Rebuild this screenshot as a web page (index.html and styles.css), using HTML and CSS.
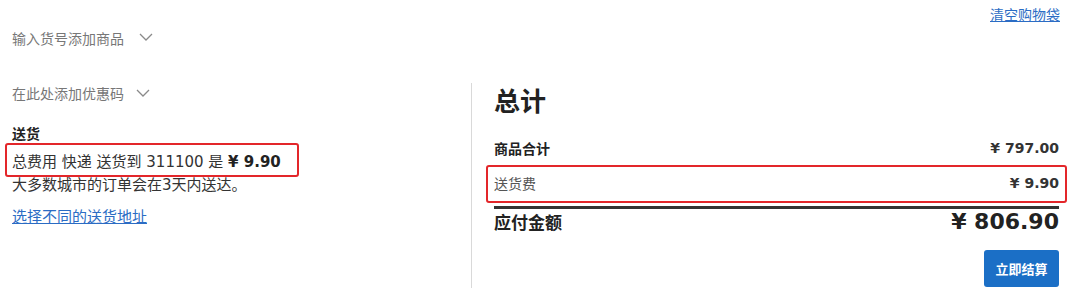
FILE: index.html
```html
<!DOCTYPE html>
<html lang="zh">
<head>
<meta charset="utf-8">
<title>购物袋</title>
<link rel="stylesheet" href="styles.css">
</head>
<body>
<div class="page">
  <div class="topbar">
    <a class="link clear-link" href="#">清空购物袋</a>
  </div>
  <div class="toggle sku-toggle">
    <span>输入货号添加商品</span>
    <svg class="chev" width="14" height="8" viewBox="0 0 14 8"><polyline points="1,1 7,7 13,1" fill="none" stroke="#8a8a8a" stroke-width="1.3"/></svg>
  </div>
  <div class="main">
    <div class="left">
      <div class="toggle promo-toggle">
        <span>在此处添加优惠码</span>
        <svg class="chev" width="14" height="8" viewBox="0 0 14 8"><polyline points="1,1 7,7 13,1" fill="none" stroke="#8a8a8a" stroke-width="1.3"/></svg>
      </div>
      <div class="ship-title">送货</div>
      <div class="ship-line annot-left">总费用 快递 送货到 311100 是 <b>¥ 9.90</b></div>
      <div class="ship-note">大多数城市的订单会在3天内送达。</div>
      <a class="link ship-link" href="#">选择不同的送货地址</a>
    </div>
    <div class="right">
      <div class="sum-title">总计</div>
      <div class="row row-sub">
        <span class="row-label">商品合计</span>
        <span class="row-val">¥ 797.00</span>
      </div>
      <div class="row row-ship annot-right">
        <span class="row-label-light">送货费</span>
        <span class="row-val">¥ 9.90</span>
      </div>
      <div class="row row-total">
        <span class="total-label">应付金额</span>
        <span class="total-val">¥ 806.90</span>
      </div>
      <div class="actions">
        <button class="checkout">立即结算</button>
      </div>
    </div>
  </div>
</div>
</body>
</html>
```

FILE: styles.css
```css
* { box-sizing: border-box; }
html, body { margin: 0; padding: 0; background: #fff; }
body {
  font-family: "DejaVu Sans", "Noto Sans CJK SC", sans-serif;
  color: #333;
  width: 1080px;
  height: 298px;
  overflow: hidden;
}
.page { width: 1080px; }

.link { color: #2b6cc4; text-decoration: underline; }

.topbar {
  height: 28px;
  display: flex;
  justify-content: flex-end;
  padding: 5px 20px 0 0;
}
.clear-link {
  font-size: 14px;
  line-height: 18px;
  font-family: "Noto Sans CJK SC", sans-serif;
}

.toggle {
  display: flex;
  align-items: center;
  height: 20px;
  font-family: "Noto Sans CJK SC", sans-serif;
  font-size: 14px;
  color: #777;
  line-height: 20px;
}
.sku-toggle { padding-left: 12px; }
.sku-toggle .chev { margin-left: 15px; margin-top: -2px; }
.promo-toggle .chev { margin-left: 12px; margin-top: -1px; }

.main {
  margin-top: 35px;
  display: grid;
  grid-template-columns: 471px 1fr;
}

.left { padding-left: 12px; display: flex; flex-direction: column; align-items: flex-start; }
.ship-title {
  margin-top: 20px;
  font-family: "Noto Sans CJK SC", sans-serif;
  font-weight: bold;
  font-size: 14px;
  line-height: 20px;
  color: #222;
}
.ship-line {
  margin-top: 9px;
  font-size: 15px;
  line-height: 20px;
  color: #333;
}
.ship-line b { font-weight: bold; color: #222; }
.ship-note {
  margin-top: 3px;
  font-size: 15px;
  line-height: 20px;
  color: #333;
}
.ship-link {
  margin-top: 11px;
  font-size: 15px;
  line-height: 20px;
  font-family: "Noto Sans CJK SC", sans-serif;
}

.annot-left, .annot-right { position: relative; }
.annot-left::after {
  content: "";
  position: absolute;
  left: -7px;
  top: -9px;
  width: 290px;
  height: 30px;
  border: 2px solid #e3262a;
  border-radius: 3px;
}
.annot-right::after {
  content: "";
  position: absolute;
  left: -8px;
  right: -8px;
  top: -8px;
  height: 34px;
  border: 2px solid #e3262a;
  border-radius: 3px;
}

.right {
  border-left: 1px solid #d9d9d9;
  padding: 1px 21px 1px 22px;
  display: flex;
  flex-direction: column;
}
.sum-title {
  font-family: "Noto Sans CJK SC", sans-serif;
  font-weight: bold;
  font-size: 26px;
  line-height: 32px;
  color: #222;
}
.row {
  display: flex;
  justify-content: space-between;
  align-items: center;
  height: 20px;
}
.row-sub { margin-top: 22px; }
.row-ship { margin-top: 15px; }
.row-label {
  font-family: "Noto Sans CJK SC", sans-serif;
  font-weight: bold;
  font-size: 14px;
  color: #222;
}
.row-label-light {
  font-family: "Noto Sans CJK SC", sans-serif;
  font-size: 14px;
  color: #555;
}
.row-val {
  font-weight: bold;
  font-size: 14px;
  color: #333;
}
.row-total {
  margin-top: 13px;
  border-top: 3px solid #333;
  height: 27px;
  padding-top: 1px;
}
.total-label {
  font-family: "Noto Sans CJK SC", sans-serif;
  font-weight: bold;
  font-size: 17px;
  color: #222;
}
.total-val {
  font-weight: bold;
  font-size: 22px;
  color: #222;
}
.actions {
  display: flex;
  justify-content: flex-end;
  margin-top: 17px;
}
.checkout {
  width: 75px;
  height: 37px;
  border: none;
  border-radius: 3px;
  background: #1b6fc6;
  color: #fff;
  font-family: "Noto Sans CJK SC", sans-serif;
  font-weight: bold;
  font-size: 13px;
  padding: 0;
}
```
